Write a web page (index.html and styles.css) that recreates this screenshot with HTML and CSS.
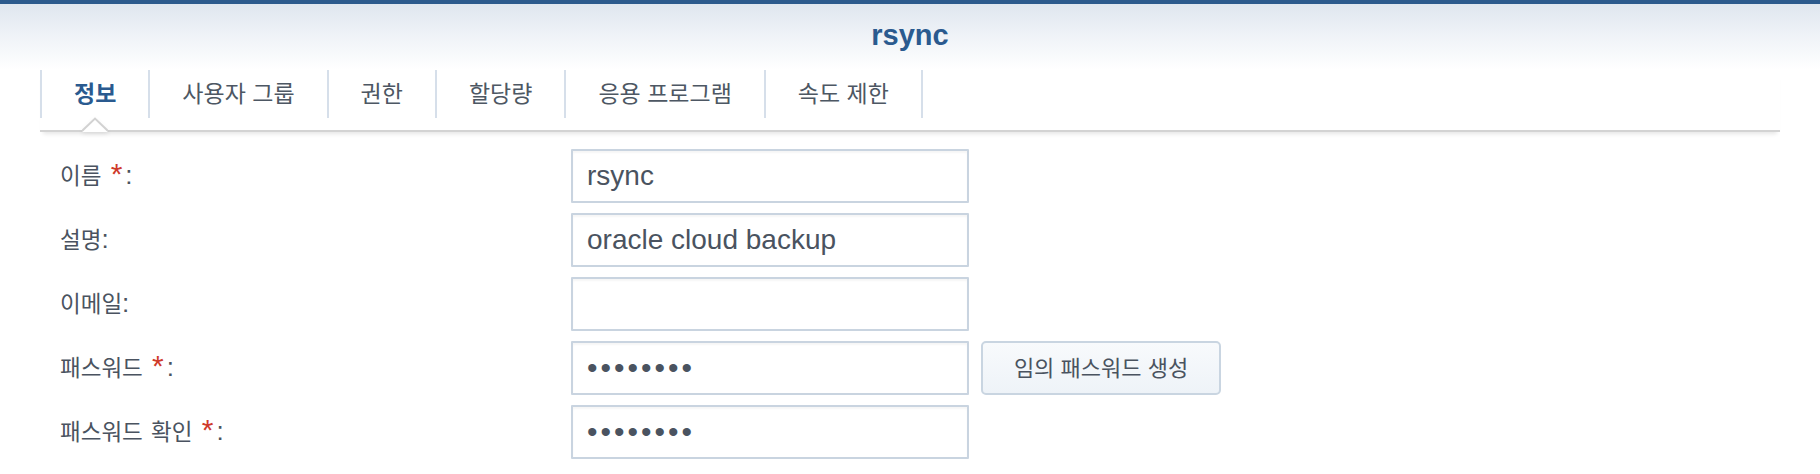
FILE: index.html
```html
<!DOCTYPE html>
<html lang="ko">
<head>
<meta charset="utf-8">
<title>rsync</title>
<link rel="stylesheet" href="styles.css">
</head>
<body>
<div class="window">
  <div class="topbar"></div>
  <header class="titlebar">
    <h1 class="title">rsync</h1>
  </header>
  <div class="content">
    <nav class="tabs">
      <div class="tab active">정보</div>
      <div class="tab">사용자 그룹</div>
      <div class="tab">권한</div>
      <div class="tab">할당량</div>
      <div class="tab">응용 프로그램</div>
      <div class="tab">속도 제한</div>
      <svg class="caret" width="26" height="15" viewBox="0 0 26 15">
        <polygon points="0,15 13,1.5 26,15" fill="#fff"/>
        <path d="M0,14 L13,1.6 L26,14" fill="none" stroke="#d2d2d2" stroke-width="2"/>
      </svg>
    </nav>
    <form class="form">
      <div class="row">
        <label class="label">이름<span class="mark"> <span class="req">*</span>:</span></label>
        <input class="field" type="text" value="rsync">
      </div>
      <div class="row">
        <label class="label">설명<span class="mark">:</span></label>
        <input class="field" type="text" value="oracle cloud backup">
      </div>
      <div class="row">
        <label class="label">이메일<span class="mark">:</span></label>
        <input class="field" type="text" value="">
      </div>
      <div class="row">
        <label class="label">패스워드<span class="mark"> <span class="req">*</span>:</span></label>
        <input class="field pw" type="password" value="abcdefgh">
        <button class="btn" type="button">임의 패스워드 생성</button>
      </div>
      <div class="row">
        <label class="label">패스워드 확인<span class="mark"> <span class="req">*</span>:</span></label>
        <input class="field pw" type="password" value="abcdefgh">
      </div>
    </form>
  </div>
</div>
</body>
</html>
```
FILE: styles.css
```css
* { box-sizing: border-box; }
html, body { margin: 0; padding: 0; background: #fff; }
body {
  font-family: "Noto Sans CJK KR", "Liberation Sans", sans-serif;
  color: #4a5360;
  width: 1820px;
  height: 474px;
  overflow: hidden;
}
.topbar { height: 4px; background: #2c5a8d; }
.titlebar {
  height: 66px;
  background: linear-gradient(#dfe6ef 0%, #eef2f7 45%, #ffffff 100%);
  padding-top: 15px;
  text-align: center;
}
.title {
  margin: 0;
  font-family: "Liberation Sans", sans-serif;
  font-weight: bold;
  font-size: 29px;
  line-height: 32px;
  color: #2a5a8f;
}
.content { padding: 0 40px; }
.tabs {
  position: relative;
  display: flex;
  align-items: flex-start;
  height: 62px;
  border-bottom: 2px solid #d3d3d3;
  box-shadow: 0 5px 4px -3px rgba(0, 0, 0, 0.1);
}
.tab {
  height: 48px;
  line-height: 44px;
  padding: 0 32px;
  border-left: 2px solid #d6dfea;
  font-size: 23px;
  color: #4d5763;
  white-space: nowrap;
}
.tab:last-of-type { border-right: 2px solid #d6dfea; }
.tab.active { color: #2a5a8f; font-weight: bold; }
.caret {
  position: absolute;
  left: 42px;
  top: 47px;
  filter: drop-shadow(0 2px 2px rgba(0, 0, 0, 0.08));
}
.form {
  margin-top: 17px;
  padding-left: 20px;
  display: flex;
  flex-direction: column;
  gap: 10px;
}
.row { display: flex; align-items: center; height: 54px; }
.label {
  width: 511px;
  font-size: 22.5px;
  line-height: 30px;
  margin-bottom: 4px;
  word-spacing: 2px;
  color: #4a5360;
  white-space: nowrap;
}
.mark {
  font-family: "Liberation Sans", sans-serif;
  font-size: 26px;
  word-spacing: 0;
}
.req {
  color: #cf3a2b;
  font-size: 30px;
  margin-left: 2px;
  margin-right: 3px;
}
.field {
  width: 398px;
  height: 54px;
  border: 2px solid #c9d4e0;
  border-radius: 1px;
  padding: 0 14px;
  font-family: "Liberation Sans", sans-serif;
  font-size: 28px;
  color: #4a5360;
  background: #fff;
  box-shadow: inset 0 2px 2px rgba(0, 0, 0, 0.04);
  outline: none;
}
.field.pw { letter-spacing: 3px; font-size: 30px; }
.btn {
  margin-left: 12px;
  width: 240px;
  height: 54px;
  border: 2px solid #c9d5e1;
  border-radius: 5px;
  background: linear-gradient(#f8fafc, #eef3f8);
  font-family: "Noto Sans CJK KR", sans-serif;
  font-size: 22px;
  color: #4a5360;
  padding: 0 0 4px;
}
```
